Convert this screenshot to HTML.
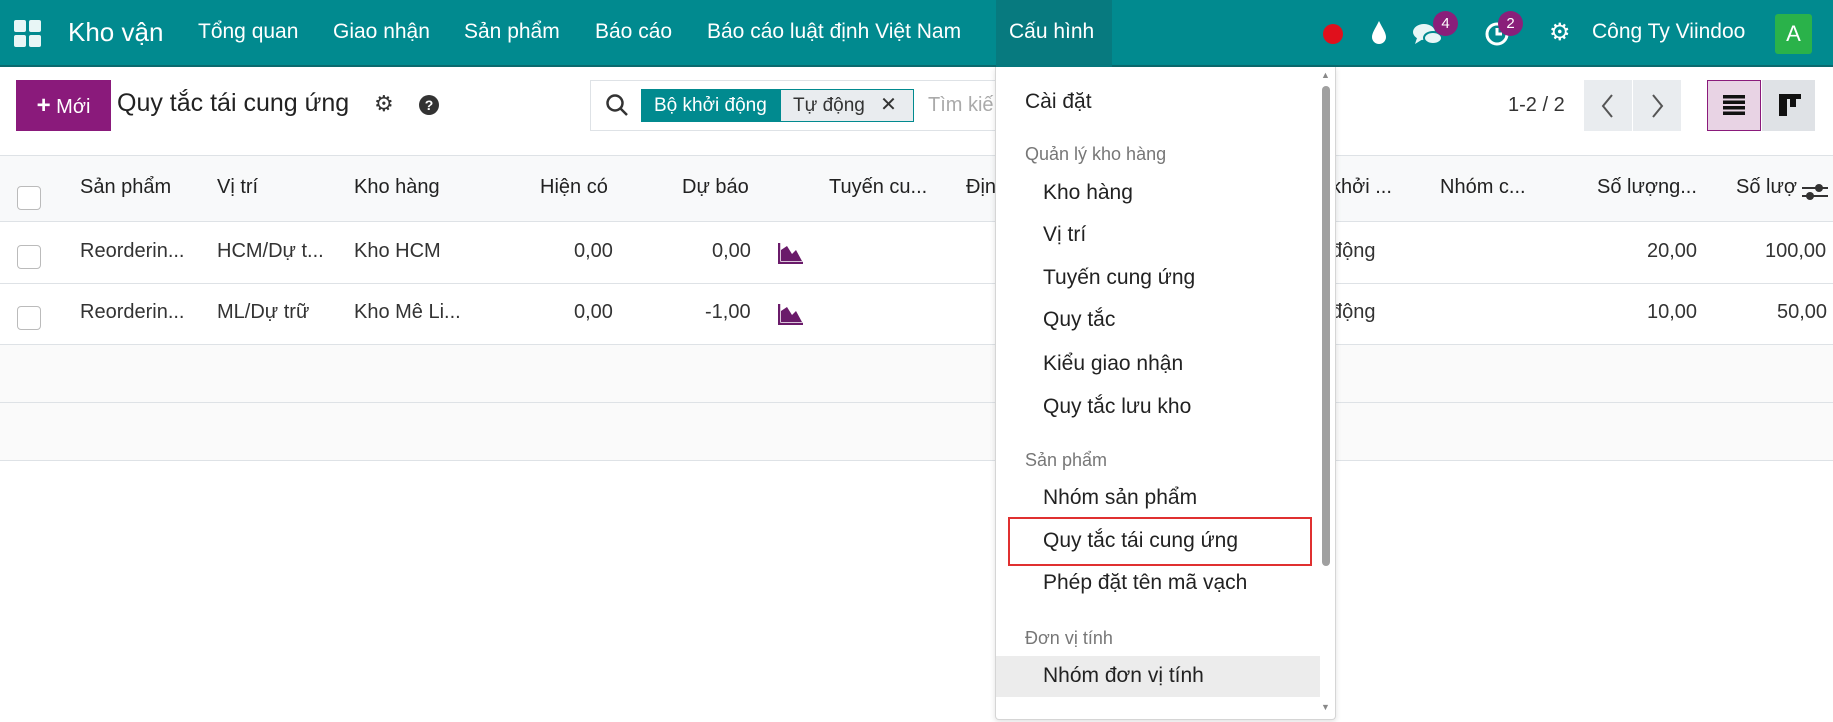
<!DOCTYPE html>
<html><head><meta charset="utf-8"><style>
*{margin:0;padding:0;box-sizing:border-box}
body{width:1833px;height:722px;overflow:hidden;background:#fff;font-family:"Liberation Sans",sans-serif;color:#374151;position:relative}
.a{position:absolute;white-space:nowrap}
.nav{position:absolute;left:0;top:0;width:1833px;height:67px;background:#018a8f;border-bottom:2px solid #0a6a6e}
.nv{position:absolute;top:20px;color:#fff;font-size:21px}
.th{position:absolute;top:176px;font-size:20px;color:#222}
.td{position:absolute;font-size:20px;color:#333}
.mi{position:absolute;left:1043px;font-size:21px;color:#222}
.mh{position:absolute;left:1025px;font-size:18px;color:#777}
.cb{position:absolute;left:17px;width:24px;height:24px;border:1px solid #bbb;border-radius:4px;background:#fff}
</style></head><body>
<div class="nav">
  <svg class="a" style="left:14px;top:20px" width="27" height="27"><rect x="0" y="0" width="12" height="12" rx="2" fill="#e8f6f6"/><rect x="15" y="0" width="12" height="12" rx="2" fill="#e8f6f6"/><rect x="0" y="15" width="12" height="12" rx="2" fill="#e8f6f6"/><rect x="15" y="15" width="12" height="12" rx="2" fill="#e8f6f6"/></svg>
  <div class="nv" style="left:68px;top:17px;font-size:26px">Kho vận</div>
  <div class="nv" style="left:198px">Tổng quan</div>
  <div class="nv" style="left:333px">Giao nhận</div>
  <div class="nv" style="left:464px">Sản phẩm</div>
  <div class="nv" style="left:595px">Báo cáo</div>
  <div class="nv" style="left:707px">Báo cáo luật định Việt Nam</div>
  <div class="a" style="left:996px;top:0;width:116px;height:67px;background:#077a7f"></div>
  <div class="nv" style="left:1009px">Cấu hình</div>
  <div class="a" style="left:1323px;top:24px;width:20px;height:20px;border-radius:50%;background:#e0101c"></div>
  <svg class="a" style="left:1370px;top:20px" width="18" height="26"><path d="M9 1 C5 9 2 13 2 17 A7 7 0 0 0 16 17 C16 13 13 9 9 1Z" fill="#fff"/></svg>
  <svg class="a" style="left:1412px;top:22px" width="32" height="26"><ellipse cx="12" cy="10" rx="11" ry="8" fill="#e8f6f6"/><path d="M5 16 L3 22 L11 17Z" fill="#e8f6f6"/><ellipse cx="21" cy="16" rx="9" ry="6" fill="#e8f6f6" stroke="#018a8f" stroke-width="2"/></svg>
  <div class="a" style="left:1433px;top:11px;width:25px;height:25px;border-radius:50%;background:#8a1f7a;color:#fff;font-size:15px;text-align:center;line-height:25px">4</div>
  <svg class="a" style="left:1484px;top:21px" width="26" height="26"><circle cx="13" cy="13" r="10" fill="none" stroke="#fff" stroke-width="3"/><path d="M13 7 V13 H18" stroke="#fff" stroke-width="3" fill="none"/></svg>
  <div class="a" style="left:1498px;top:11px;width:25px;height:25px;border-radius:50%;background:#8a1f7a;color:#fff;font-size:15px;text-align:center;line-height:25px">2</div>
  <div class="a" style="left:1549px;top:18px;color:#fff;font-size:24px">⚙</div>
  <div class="nv" style="left:1592px">Công Ty Viindoo</div>
  <div class="a" style="left:1775px;top:14px;width:37px;height:40px;background:#2ab24a;border-radius:3px;color:#fff;font-size:22px;text-align:center;line-height:40px">A</div>
</div>

<div class="a" style="left:16px;top:80px;width:95px;height:51px;background:#8a1a7b;color:#fff;font-size:20px;line-height:51px;text-align:center"><b style="font-size:24px">+</b> Mới</div>
<div class="a" style="left:117px;top:89px;font-size:25px;color:#222">Quy tắc tái cung ứng</div>
<div class="a" style="left:374px;top:91px;font-size:22px;color:#333">⚙</div>
<div class="a" style="left:419px;top:95px;width:20px;height:20px;border-radius:50%;background:#333;color:#fff;font-size:14px;font-weight:bold;text-align:center;line-height:20px">?</div>

<div class="a" style="left:590px;top:80px;width:420px;height:51px;border:1px solid #dee2e6"></div>
<svg class="a" style="left:605px;top:93px" width="24" height="24"><circle cx="10" cy="10" r="7.5" fill="none" stroke="#333" stroke-width="2.5"/><path d="M15.5 15.5 L22 22" stroke="#333" stroke-width="2.5"/></svg>
<div class="a" style="left:641px;top:89px;width:140px;height:33px;background:#018a8f;color:#fff;font-size:19px;line-height:33px;padding-left:13px">Bộ khởi động</div>
<div class="a" style="left:781px;top:89px;width:133px;height:33px;background:#e9ecef;border:1px solid #018a8f;border-left:none;color:#333;font-size:19px;line-height:31px;padding-left:12px">Tự động <span style="margin-left:10px;font-size:20px">✕</span></div>
<div class="a" style="left:928px;top:94px;font-size:20px;color:#aaa">Tìm kiế</div>

<div class="a" style="left:1508px;top:94px;font-size:20px;color:#333">1-2 / 2</div>
<div class="a" style="left:1584px;top:80px;width:48px;height:51px;background:#e9ecef"></div>
<div class="a" style="left:1633px;top:80px;width:48px;height:51px;background:#e9ecef"></div>
<svg class="a" style="left:1598px;top:93px" width="20" height="26"><path d="M14 2 L5 13 L14 24" stroke="#555" stroke-width="2" fill="none"/></svg>
<svg class="a" style="left:1647px;top:93px" width="20" height="26"><path d="M6 2 L15 13 L6 24" stroke="#555" stroke-width="2" fill="none"/></svg>
<div class="a" style="left:1707px;top:80px;width:54px;height:51px;background:#e8d3e4;border:1px solid #8a1a7b"></div>
<svg class="a" style="left:1723px;top:95px" width="22" height="20"><rect y="0" width="22" height="3.5" fill="#111"/><rect y="5.5" width="22" height="3.5" fill="#111"/><rect y="11" width="22" height="3.5" fill="#111"/><rect y="16.5" width="22" height="3.5" fill="#111"/></svg>
<div class="a" style="left:1762px;top:80px;width:53px;height:51px;background:#dfe2e6"></div>
<svg class="a" style="left:1779px;top:94px" width="22" height="22"><rect x="0" y="0" width="22" height="5" fill="#111"/><rect x="0" y="0" width="8" height="22" fill="#111"/><rect x="11" y="0" width="6" height="13" fill="#111"/></svg>

<div class="a" style="left:0;top:155px;width:1833px;height:67px;background:#f8f9fa;border-top:1px solid #dee2e6;border-bottom:1px solid #dee2e6"></div>
<div class="cb" style="top:186px"></div>
<div class="th" style="left:80px">Sản phẩm</div>
<div class="th" style="left:217px">Vị trí</div>
<div class="th" style="left:354px">Kho hàng</div>
<div class="th" style="left:540px">Hiện có</div>
<div class="th" style="left:682px">Dự báo</div>
<div class="th" style="left:829px">Tuyến cu...</div>
<div class="th" style="left:966px">Địn</div>
<div class="th" style="left:1331px">khởi ...</div>
<div class="th" style="left:1440px">Nhóm c...</div>
<div class="th" style="left:1597px">Số lượng...</div>
<div class="th" style="left:1736px">Số lượ</div>
<svg class="a" style="left:1802px;top:180px" width="26" height="24"><path d="M0 8 H26 M0 16 H26" stroke="#333" stroke-width="2"/><circle cx="17" cy="8" r="4" fill="#333"/><circle cx="8" cy="16" r="4" fill="#333"/></svg>
<div class="a" style="left:1789px;top:155px;width:44px;height:67px;background:#f8f9fa;opacity:0"></div>

<div class="a" style="left:0;top:283px;width:1833px;height:1px;background:#dee2e6"></div>
<div class="a" style="left:0;top:344px;width:1833px;height:1px;background:#dee2e6"></div>
<div class="a" style="left:0;top:345px;width:1833px;height:116px;background:#fafafa;border-bottom:1px solid #dee2e6"></div>
<div class="a" style="left:0;top:402px;width:1833px;height:1px;background:#dee2e6"></div>

<div class="cb" style="top:245px"></div>
<div class="td" style="left:80px;top:240px">Reorderin...</div>
<div class="td" style="left:217px;top:240px">HCM/Dự t...</div>
<div class="td" style="left:354px;top:240px">Kho HCM</div>
<div class="td" style="left:574px;top:240px">0,00</div>
<div class="td" style="left:712px;top:240px">0,00</div>
<svg class="a" style="left:778px;top:242px" width="26" height="22"><path d="M1 1 V21 H25" stroke="#6a1b6a" stroke-width="2.5" fill="none"/><path d="M3 19 L3 8 L9 4 L14 12 L18 8 L24 19Z" fill="#6a1b6a"/></svg>
<div class="td" style="left:1331px;top:240px">động</div>
<div class="td" style="left:1647px;top:240px">20,00</div>
<div class="td" style="left:1765px;top:240px">100,00</div>

<div class="cb" style="top:306px"></div>
<div class="td" style="left:80px;top:301px">Reorderin...</div>
<div class="td" style="left:217px;top:301px">ML/Dự trữ</div>
<div class="td" style="left:354px;top:301px">Kho Mê Li...</div>
<div class="td" style="left:574px;top:301px">0,00</div>
<div class="td" style="left:705px;top:301px">-1,00</div>
<svg class="a" style="left:778px;top:303px" width="26" height="22"><path d="M1 1 V21 H25" stroke="#6a1b6a" stroke-width="2.5" fill="none"/><path d="M3 19 L3 8 L9 4 L14 12 L18 8 L24 19Z" fill="#6a1b6a"/></svg>
<div class="td" style="left:1331px;top:301px">động</div>
<div class="td" style="left:1647px;top:301px">10,00</div>
<div class="td" style="left:1777px;top:301px">50,00</div>

<div class="a" style="left:995px;top:67px;width:341px;height:653px;background:#fff;border:1px solid #d5d5d5;border-top:none;border-radius:0 0 4px 4px;box-shadow:0 2px 6px rgba(0,0,0,.12)"></div>
<div class="a" style="left:1322px;top:86px;width:8px;height:480px;background:#a0a0a0;border-radius:4px"></div>
<div class="a" style="left:1321px;top:70px;font-size:9px;color:#888">▲</div>
<div class="a" style="left:1321px;top:702px;font-size:9px;color:#888">▼</div>
<div class="mi" style="left:1025px;top:90px">Cài đặt</div>
<div class="mh" style="top:144px">Quản lý kho hàng</div>
<div class="mi" style="top:181px">Kho hàng</div>
<div class="mi" style="top:223px">Vị trí</div>
<div class="mi" style="top:266px">Tuyến cung ứng</div>
<div class="mi" style="top:308px">Quy tắc</div>
<div class="mi" style="top:352px">Kiểu giao nhận</div>
<div class="mi" style="top:395px">Quy tắc lưu kho</div>
<div class="mh" style="top:450px">Sản phẩm</div>
<div class="mi" style="top:486px">Nhóm sản phẩm</div>
<div class="a" style="left:1008px;top:517px;width:304px;height:49px;border:2px solid #e03030"></div>
<div class="mi" style="top:529px">Quy tắc tái cung ứng</div>
<div class="mi" style="top:571px">Phép đặt tên mã vạch</div>
<div class="mh" style="top:628px">Đơn vị tính</div>
<div class="a" style="left:996px;top:656px;width:324px;height:41px;background:#ececec"></div>
<div class="mi" style="top:664px">Nhóm đơn vị tính</div>
</body></html>
